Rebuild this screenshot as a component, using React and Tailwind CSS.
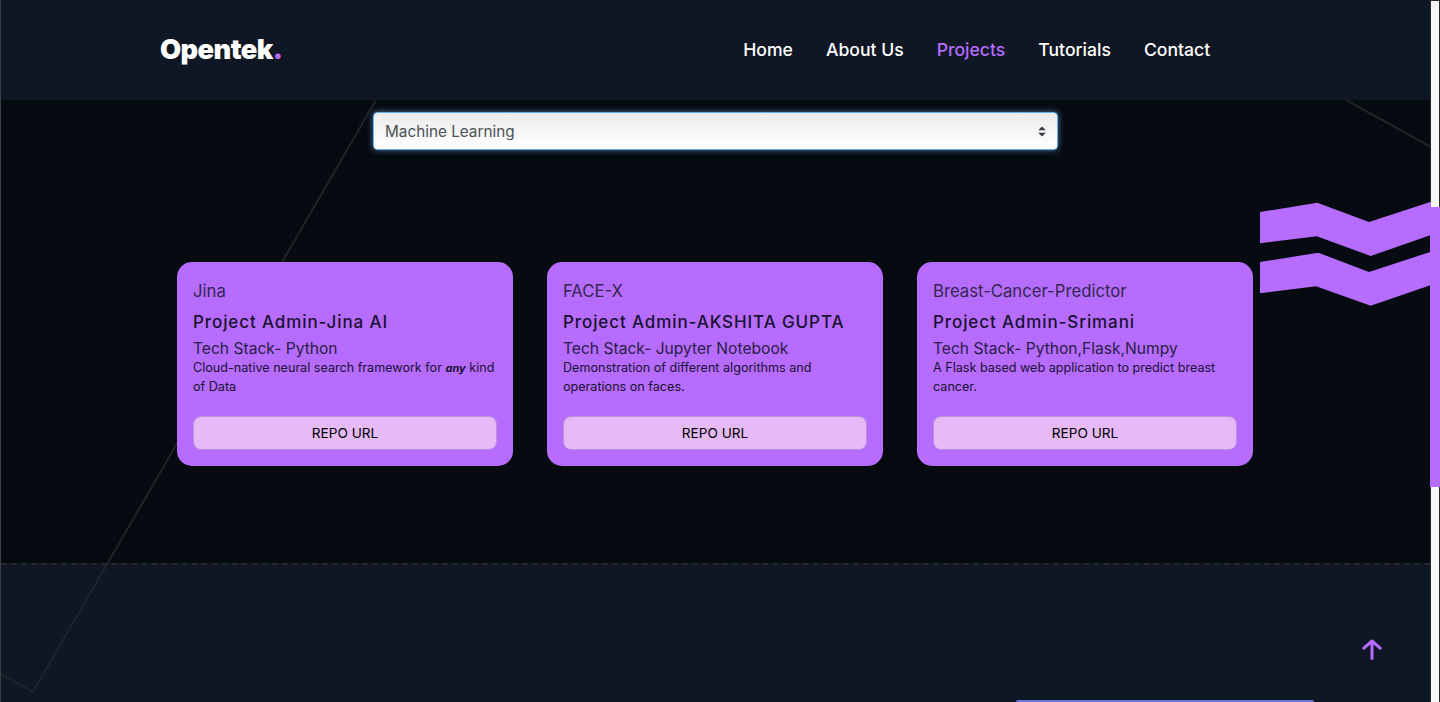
import React from 'react';

const links = ['Home', 'About Us', 'Projects', 'Tutorials', 'Contact'];

const projects = [
  {
    name: 'Jina',
    admin: 'Project Admin-Jina AI',
    stack: 'Tech Stack- Python',
    desc: (
      <>
        Cloud-native neural search framework for <em className="text-[11px] leading-none font-bold">any</em> kind of Data
      </>
    ),
  },
  {
    name: 'FACE-X',
    admin: 'Project Admin-AKSHITA GUPTA',
    stack: 'Tech Stack- Jupyter Notebook',
    desc: 'Demonstration of different algorithms and operations on faces.',
  },
  {
    name: 'Breast-Cancer-Predictor',
    admin: 'Project Admin-Srimani',
    stack: 'Tech Stack- Python,Flask,Numpy',
    desc: 'A Flask based web application to predict breast cancer.',
  },
];

const ProjectCard = ({ project }) => (
  <div className="flex h-[204px] w-[336px] flex-col rounded-[15px] bg-[#b56cff] px-4 pt-[18px] text-[#1a1030]">
    <h3 className="text-[16.7px] leading-[22px] text-[#33264f]">{project.name}</h3>
    <h4 className="mt-[9px] text-[17px] leading-[22px] font-medium tracking-[0.9px]">{project.admin}</h4>
    <p className="mt-[6px] text-[15.6px] leading-[20px] text-[#2a1c45]">{project.stack}</p>
    <p className="-mt-px h-[38px] text-[12.6px] leading-[19px]">{project.desc}</p>
    <button className="mt-[20px] h-[34px] w-full rounded-lg border border-[#bb8fd8] bg-[#e6b9f7] text-[13.6px] text-black">
      REPO URL
    </button>
  </div>
);

const App = () => {
  return (
    <div className="relative flex h-[702px] w-full overflow-hidden bg-white font-['Inter',sans-serif]">
      <div className="relative flex w-[1430px] flex-col border-l border-[#3a3f47] bg-[#060a11]">
        <header className="flex h-[100px] shrink-0 items-center bg-[#0f1724] pl-[159px]">
          <div className="text-[27.3px] font-black tracking-[-0.6px] text-white">
            Opentek<span className="text-[#b56cff]">.</span>
          </div>
          <nav className="ml-[461px] flex gap-[33px] text-[17.6px] font-medium text-white">
            {links.map((link) => (
              <a key={link} className={link === 'Projects' ? 'text-[#b56cff]' : ''}>
                {link}
              </a>
            ))}
          </nav>
        </header>

        <main className="relative z-10 flex h-[463px] shrink-0 flex-col items-start pl-[176px]">
          <div className="relative ml-[196px] mt-3">
            <select
              defaultValue="Machine Learning"
              className="h-[38px] w-[685px] appearance-none rounded border border-[#6aaef2] bg-gradient-to-b from-[#ebebeb] to-white px-[11px] pt-[2px] text-[15.3px] text-[#495057] shadow-[0_0_6px_rgba(128,189,255,0.6)] outline-none"
            >
              <option>Machine Learning</option>
            </select>
            <svg className="absolute right-[11px] top-[14px] h-[11px] w-[10px]" viewBox="0 0 10 11" fill="#343a40">
              <path d="M5 0.5 L8.8 4.3 H1.2 Z M5 10.5 L8.8 6.7 H1.2 Z" />
            </svg>
          </div>
          <div className="mt-[112px] flex gap-[34px]">
            {projects.map((project) => (
              <ProjectCard key={project.name} project={project} />
            ))}
          </div>
        </main>

        <footer className="flex-1 border-t-2 border-dashed border-[#26272b] bg-[#0f1724]" />

        {/* decorative outline, behind the cards */}
        <svg className="absolute left-0 top-0 h-[702px] w-[1430px]" viewBox="0 0 1430 702" fill="none" stroke="#212327" strokeWidth="2">
          <path d="M375 100 L32 692 L0 674" />
          <path d="M1345 100 L1430 147" />
        </svg>

        {/* wave */}
        <svg className="absolute left-[1259px] top-[200px] z-20 h-[108px] w-[171px]" viewBox="1260 200 171 108" fill="#b56cff">
          <path d="M1260 212 L1317.3 202.7 L1369 222 L1431 201.7 V235 L1370.7 256 L1316.7 236.3 L1260 243.3 Z" />
          <path d="M1260 262 L1318.3 252.7 L1369 272 L1431 251.7 V285 L1370.7 305.7 L1316 286.3 L1260 293.3 Z" />
        </svg>

        {/* back to top */}
        <button className="absolute left-[1339px] top-[618px] z-30 flex h-[64px] w-[64px] items-center justify-center rounded-full bg-[#0e1723]">
          <svg className="h-6 w-6" viewBox="0 0 24 24" fill="none" stroke="#b56cff" strokeWidth="3" strokeLinecap="round" strokeLinejoin="round">
            <path d="M12 20.5 V3 M3.8 10.2 L12 3 L20.2 10.2" />
          </svg>
        </button>

        <div className="absolute bottom-0 left-[1015px] z-30 h-[2px] w-[298px] rounded-t bg-[#6b74d8]" />
      </div>

      {/* scrollbar */}
      <div className="flex w-[10px] flex-col border-x border-t border-[#2a2a2a] bg-[#f5f5f5]">
        <div className="-mx-px mt-[206px] h-[280px] bg-[#b56cff]" />
      </div>
    </div>
  );
};

export default App;
